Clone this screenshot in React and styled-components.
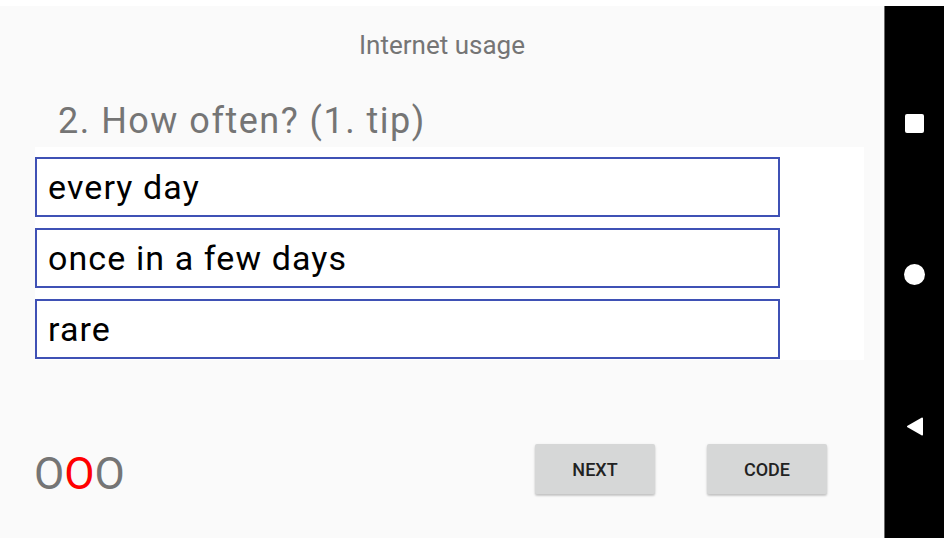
import styled, { createGlobalStyle } from "styled-components";

const GlobalStyle = createGlobalStyle`
  html, body {
    margin: 0;
    padding: 0;
    background: #ffffff;
  }
  body {
    font-family: Roboto, "Liberation Sans", sans-serif;
  }
`;

const Screen = styled.div`
  width: 944px;
  height: 538px;
  padding-top: 6px;
  box-sizing: border-box;
  display: flex;
  background: #ffffff;
  overflow: hidden;
`;

const Main = styled.div`
  width: 884px;
  height: 100%;
  background: #fafafa;
  display: flex;
  flex-direction: column;
`;

const Header = styled.h2`
  margin: 24px 0 0;
  text-align: center;
  font-size: 26px;
  font-weight: 400;
  color: #757575;
`;

const Question = styled.h1`
  margin: 40px 0 0;
  padding-left: 58px;
  font-size: 36px;
  letter-spacing: 1.5px;
  font-weight: 400;
  color: #757575;
`;

const Options = styled.div`
  margin: 5px 0 0 35px;
  width: 829px;
  padding: 10px 0 1px;
  background: #ffffff;
  display: flex;
  flex-direction: column;
  gap: 11px;
`;

const Option = styled.div`
  width: 745px;
  height: 60px;
  box-sizing: border-box;
  border: 2px solid #3f51b5;
  padding-left: 11px;
  display: flex;
  align-items: center;
  font-size: 34px;
  letter-spacing: 1.1px;
  color: #000000;
`;

const Footer = styled.div`
  margin-top: 84px;
  padding: 0 57px 0 34px;
  display: flex;
  align-items: flex-start;
`;

const Progress = styled.div`
  margin-top: 5px;
  flex: 1;
  font-size: 44px;
  line-height: 1.172;
  color: #757575;
`;

const Dot = styled.span`
  color: ${(p) => (p.$active ? "#ff0000" : "#757575")};
`;

const Buttons = styled.div`
  display: flex;
  gap: 52px;
`;

const Button = styled.button`
  width: 120px;
  height: 50px;
  border: none;
  border-radius: 2px;
  background: #d6d7d7;
  box-shadow: 0 2px 2px rgba(0, 0, 0, 0.14), 0 1px 3px rgba(0, 0, 0, 0.12);
  font-family: Roboto, "Liberation Sans", sans-serif;
  font-size: 18px;
  font-weight: 500;
  color: #222222;
  text-transform: uppercase;
  display: flex;
  align-items: center;
  justify-content: center;
  padding: 0;
`;

const NavBar = styled.div`
  flex: 1;
  background: #000000;
  border-left: 1px solid #6a6a6a;
  display: flex;
  flex-direction: column;
  align-items: center;
  padding-top: 108px;
  gap: 131px;
`;

const NavSquare = styled.div`
  width: 19px;
  height: 19px;
  border-radius: 2px;
  background: #ffffff;
`;

const NavCircle = styled.div`
  width: 21px;
  height: 21px;
  border-radius: 50%;
  background: #ffffff;
`;

function BackIcon() {
  return (
    <svg width="20" height="21" viewBox="0 0 20 21">
      <path
        d="M17 2.5 L3 10.5 L17 18.5 Z"
        fill="#ffffff"
        stroke="#ffffff"
        strokeWidth="2"
        strokeLinejoin="round"
      />
    </svg>
  );
}

const options = ["every day", "once in a few days", "rare"];

export default function App() {
  return (
    <>
      <GlobalStyle />
      <Screen>
        <Main>
          <Header>Internet usage</Header>
          <Question>2. How often? (1. tip)</Question>
          <Options>
            {options.map((o) => (
              <Option key={o}>{o}</Option>
            ))}
          </Options>
          <Footer>
            <Progress>
              <Dot>O</Dot>
              <Dot $active>O</Dot>
              <Dot>O</Dot>
            </Progress>
            <Buttons>
              <Button>Next</Button>
              <Button>Code</Button>
            </Buttons>
          </Footer>
        </Main>
        <NavBar>
          <NavSquare />
          <NavCircle />
          <BackIcon />
        </NavBar>
      </Screen>
    </>
  );
}
